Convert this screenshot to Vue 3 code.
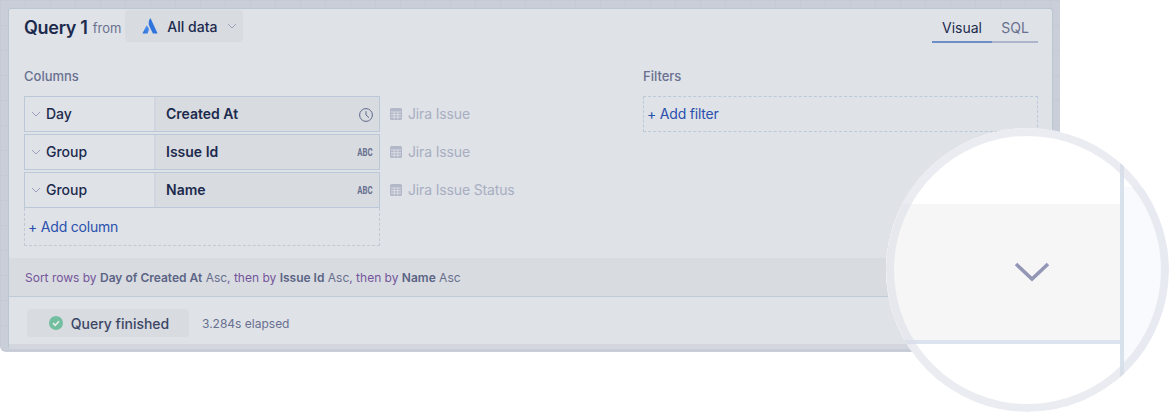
<script setup>
const columns = [
  { group: 'Day', name: 'Created At', type: 'time', source: 'Jira Issue' },
  { group: 'Group', name: 'Issue Id', type: 'abc', source: 'Jira Issue' },
  { group: 'Group', name: 'Name', type: 'abc', source: 'Jira Issue Status' },
]
</script>

<template>
  <div class="page">
    <div class="shell">
      <div class="panel">
        <header class="top">
          <div class="title">
            <h1>Query 1</h1>
            <span class="from">from</span>
            <button class="source">
              <svg class="atlassian" width="16" height="16" viewBox="0 0 16 16">
                <defs>
                  <linearGradient id="atl" x1="0" y1="1" x2="0.7" y2="0.2">
                    <stop offset="0" stop-color="#2a6fd6" />
                    <stop offset="1" stop-color="#4a8cf0" />
                  </linearGradient>
                </defs>
                <path d="M4.6 7.6 0.4 15.4H5.6L7 11.6C6.6 10 5.8 8.6 4.6 7.6Z" fill="url(#atl)" />
                <path d="M8 0.4C6.4 3 6.2 6.2 7.6 8.8L10.9 15.4H15.6L8.9 0.9C8.7 0.4 8.2 0.2 8 0.4Z" fill="#2f73dc" />
              </svg>
              <span>All data</span>
              <svg class="chev" width="10" height="6" viewBox="0 0 10 6"><path d="M1 1 5 5 9 1" /></svg>
            </button>
          </div>
          <nav class="tabs">
            <span class="tab active">Visual</span>
            <span class="tab">SQL</span>
          </nav>
        </header>

        <section class="builder">
          <div class="cols">
            <h2>Columns</h2>
            <div v-for="c in columns" :key="c.name" class="row">
              <div class="col-box">
                <div class="col-group">
                  <svg class="chev" width="10" height="6" viewBox="0 0 10 6"><path d="M1 1 5 5 9 1" /></svg>
                  <span>{{ c.group }}</span>
                </div>
                <div class="col-name">
                  <span>{{ c.name }}</span>
                  <svg v-if="c.type === 'time'" class="clock" width="14" height="14" viewBox="0 0 14 14">
                    <circle cx="7" cy="7" r="6.4" />
                    <path d="M7 3.2V7L10 9.6" />
                  </svg>
                  <span v-else class="abc">ABC</span>
                </div>
              </div>
              <div class="col-source">
                <svg width="12" height="12" viewBox="0 0 12 12">
                  <rect width="12" height="12" rx="1.5" fill="#b3b8c9" />
                  <path d="M1 4H11M1 6.7H11M1 9.2H11M4.2 4V11.5M7.8 4V11.5" stroke="#dfe2e7" stroke-width="0.8" />
                </svg>
                <span>{{ c.source }}</span>
              </div>
            </div>
            <div class="add add-col">+ Add column</div>
          </div>
          <div class="filters">
            <h2>Filters</h2>
            <div class="add add-filter">+ Add filter</div>
          </div>
        </section>

        <div class="sort">
          <em>Sort rows by</em> <b>Day of Created At</b> Asc<em>, then by</em> <b>Issue Id</b> Asc<em>, then by</em> <b>Name</b> Asc
        </div>

        <footer class="status">
          <div class="finished">
            <svg width="14" height="14" viewBox="0 0 14 14">
              <circle cx="7" cy="7" r="7" fill="#72bf9f" />
              <path d="M4 7.2 6.2 9.3 10 5.2" fill="none" stroke="#e6eeea" stroke-width="1.6" />
            </svg>
            <span>Query finished</span>
          </div>
          <span class="elapsed">3.284s elapsed</span>
        </footer>
        <div class="strip"></div>
      </div>
    </div>

    <div class="lens">
      <div class="lens-main">
        <div class="lens-band">
          <svg width="36" height="20" viewBox="0 0 36 20"><path d="M2 2 18 17 34 2" /></svg>
        </div>
        <div class="lens-rule"></div>
      </div>
      <div class="lens-line"></div>
      <div class="lens-side"></div>
    </div>
  </div>
</template>

<style>
html, body { margin: 0; background: #fff; }
</style>

<style scoped>
.page {
  position: relative;
  width: 1170px;
  height: 412px;
  overflow: hidden;
  background: #fff;
  font-family: Inter, "Noto Sans", sans-serif;
  color: #1c2a4d;
}
.shell {
  width: 1060px;
  height: 352px;
  box-sizing: border-box;
  padding: 8px 7px 3px 8px;
  border-radius: 0 0 6px 6px;
  background-color: #c9ced9;
  background-image:
    linear-gradient(#c5cad6 1px, transparent 1px),
    linear-gradient(90deg, #c5cad6 1px, transparent 1px);
  background-size: 25px 25px;
}
.panel {
  height: 100%;
  box-sizing: border-box;
  display: flex;
  flex-direction: column;
  background: #dfe2e7;
  border: 1px solid #bac6d0;
  border-bottom: 0;
  border-radius: 3px 3px 0 3px;
}
.top {
  display: flex;
  justify-content: space-between;
  align-items: flex-start;
  height: 34px;
  padding: 0 14px 0 15px;
}
.title { display: flex; align-items: center; height: 34px; }
h1 { margin: 0; padding-top: 3px; font-size: 18px; font-weight: 600; line-height: 33px; letter-spacing: -0.3px; }
.from { margin-left: 5px; padding-top: 5px; font-size: 13px; color: #68708f; line-height: 31px; }
.source {
  display: flex;
  align-items: center;
  width: 118px;
  height: 32px;
  margin: 0 0 0 4px;
  padding: 0 0 0 17px;
  box-sizing: border-box;
  border: 0;
  border-radius: 4px;
  background: #d8dbe0;
  font: 500 14px Inter, sans-serif;
  color: #1c2a4d;
}
.atlassian { margin-right: 9px; }
.source .chev { margin-left: 10px; }
.chev { fill: none; stroke: #9aa1b8; stroke-width: 1; flex: none; }
.tabs { display: flex; margin-top: 8px; }
.tab {
  height: 24px;
  width: 46px;
  text-align: center;
  font-size: 14px;
  line-height: 22px;
  color: #68708f;
  border-bottom: 2px solid #adb5cc;
}
.tab.active { width: 60px; color: #1c2a4d; border-bottom-color: #6e8fc5; }
.builder {
  height: 215px;
  display: flex;
  padding: 0 14px 0 15px;
}
h2 { margin: 0; height: 53px; box-sizing: border-box; padding-top: 24px; font-size: 13px; line-height: 18px; font-weight: 500; color: #68708f; }
.cols { width: 619px; }
.filters { flex: 1; }
.row { display: flex; align-items: center; height: 36px; margin-bottom: 2px; }
.col-box {
  display: flex;
  width: 356px;
  height: 36px;
  box-sizing: border-box;
  border: 1px solid #bbc8d8;
}
.col-group {
  display: flex;
  align-items: center;
  width: 131px;
  box-sizing: border-box;
  padding: 0 0 1px 6px;
  border-right: 2px solid #cfd6e0;
  font-size: 14px;
  font-weight: 500;
}
.col-group .chev { margin-right: 5px; }
.col-name {
  flex: 1;
  display: flex;
  align-items: center;
  justify-content: space-between;
  padding: 0 6px 1px 10px;
  background: #d8dbe0;
  font-size: 14px;
  font-weight: 600;
}
.clock { fill: none; stroke: #5f688a; stroke-width: 1; position: relative; top: 1px; }
.abc {
  font-size: 10px;
  font-weight: 700;
  color: #68708f;
  font-family: Roboto, sans-serif;
  transform: scaleX(0.78);
  transform-origin: right center;
  position: relative;
  top: 1px;
}
.col-source {
  display: flex;
  align-items: center;
  gap: 6px;
  margin-left: 10px;
  padding-bottom: 1px;
  font-size: 14px;
  letter-spacing: -0.15px;
  color: #a8aec2;
}
.add {
  box-sizing: border-box;
  border: 1px dashed #c3c9d4;
  font-size: 14px;
  letter-spacing: -0.2px;
  color: #2a50ad;
  display: flex;
  align-items: center;
  padding-left: 3px;
}
.add-col { width: 356px; height: 38px; margin-top: -2px; border-top: 0; }
.add-filter { height: 36px; padding-bottom: 1px; border-color: #bcc9d8; }
.sort {
  height: 39px;
  box-sizing: border-box;
  padding-left: 16px;
  background: #d8dbe0;
  border-bottom: 1px solid #bfcbd8;
  font-size: 12px;
  line-height: 39px;
  color: #68708f;
}
.sort em { font-style: normal; color: #74559b; }
.sort b { font-weight: 600; color: #5b6485; }
.status {
  flex: 1;
  display: flex;
  align-items: center;
  padding: 5px 0 0 18px;
}
.finished {
  display: flex;
  align-items: center;
  justify-content: center;
  gap: 8px;
  width: 162px;
  height: 28px;
  box-sizing: border-box;
  padding-left: 2px;
  border-radius: 4px;
  background: #d8dbe0;
  font-size: 14px;
  font-weight: 500;
  color: #3c4766;
}
.elapsed { margin-left: 13px; font-size: 12px; color: #68708f; }
.strip { height: 5px; background: #d3d6dc; }

.lens {
  position: absolute;
  left: 886px;
  top: 128px;
  width: 283px;
  height: 284px;
  display: flex;
  border-radius: 50%;
  overflow: hidden;
  background: #fff;
}
.lens::after {
  content: "";
  position: absolute;
  inset: 0;
  box-sizing: border-box;
  border: 8px solid rgba(216, 220, 230, 0.55);
  border-radius: 50%;
}
.lens-main { width: 234px; padding-top: 76px; }
.lens-band {
  height: 136px;
  display: flex;
  align-items: center;
  justify-content: center;
  box-sizing: border-box;
  padding: 0 0 0 58px;
  background: #f6f6f7;
}
.lens-band svg { fill: none; stroke: #9397b5; stroke-width: 3.6; position: relative; top: 0; }
.lens-rule { height: 4px; background: #dbe3ee; }
.lens-line { width: 4px; background: #d8e2ec; }
.lens-side { flex: 1; margin-top: 59px; background: #f9fafd; }
</style>
